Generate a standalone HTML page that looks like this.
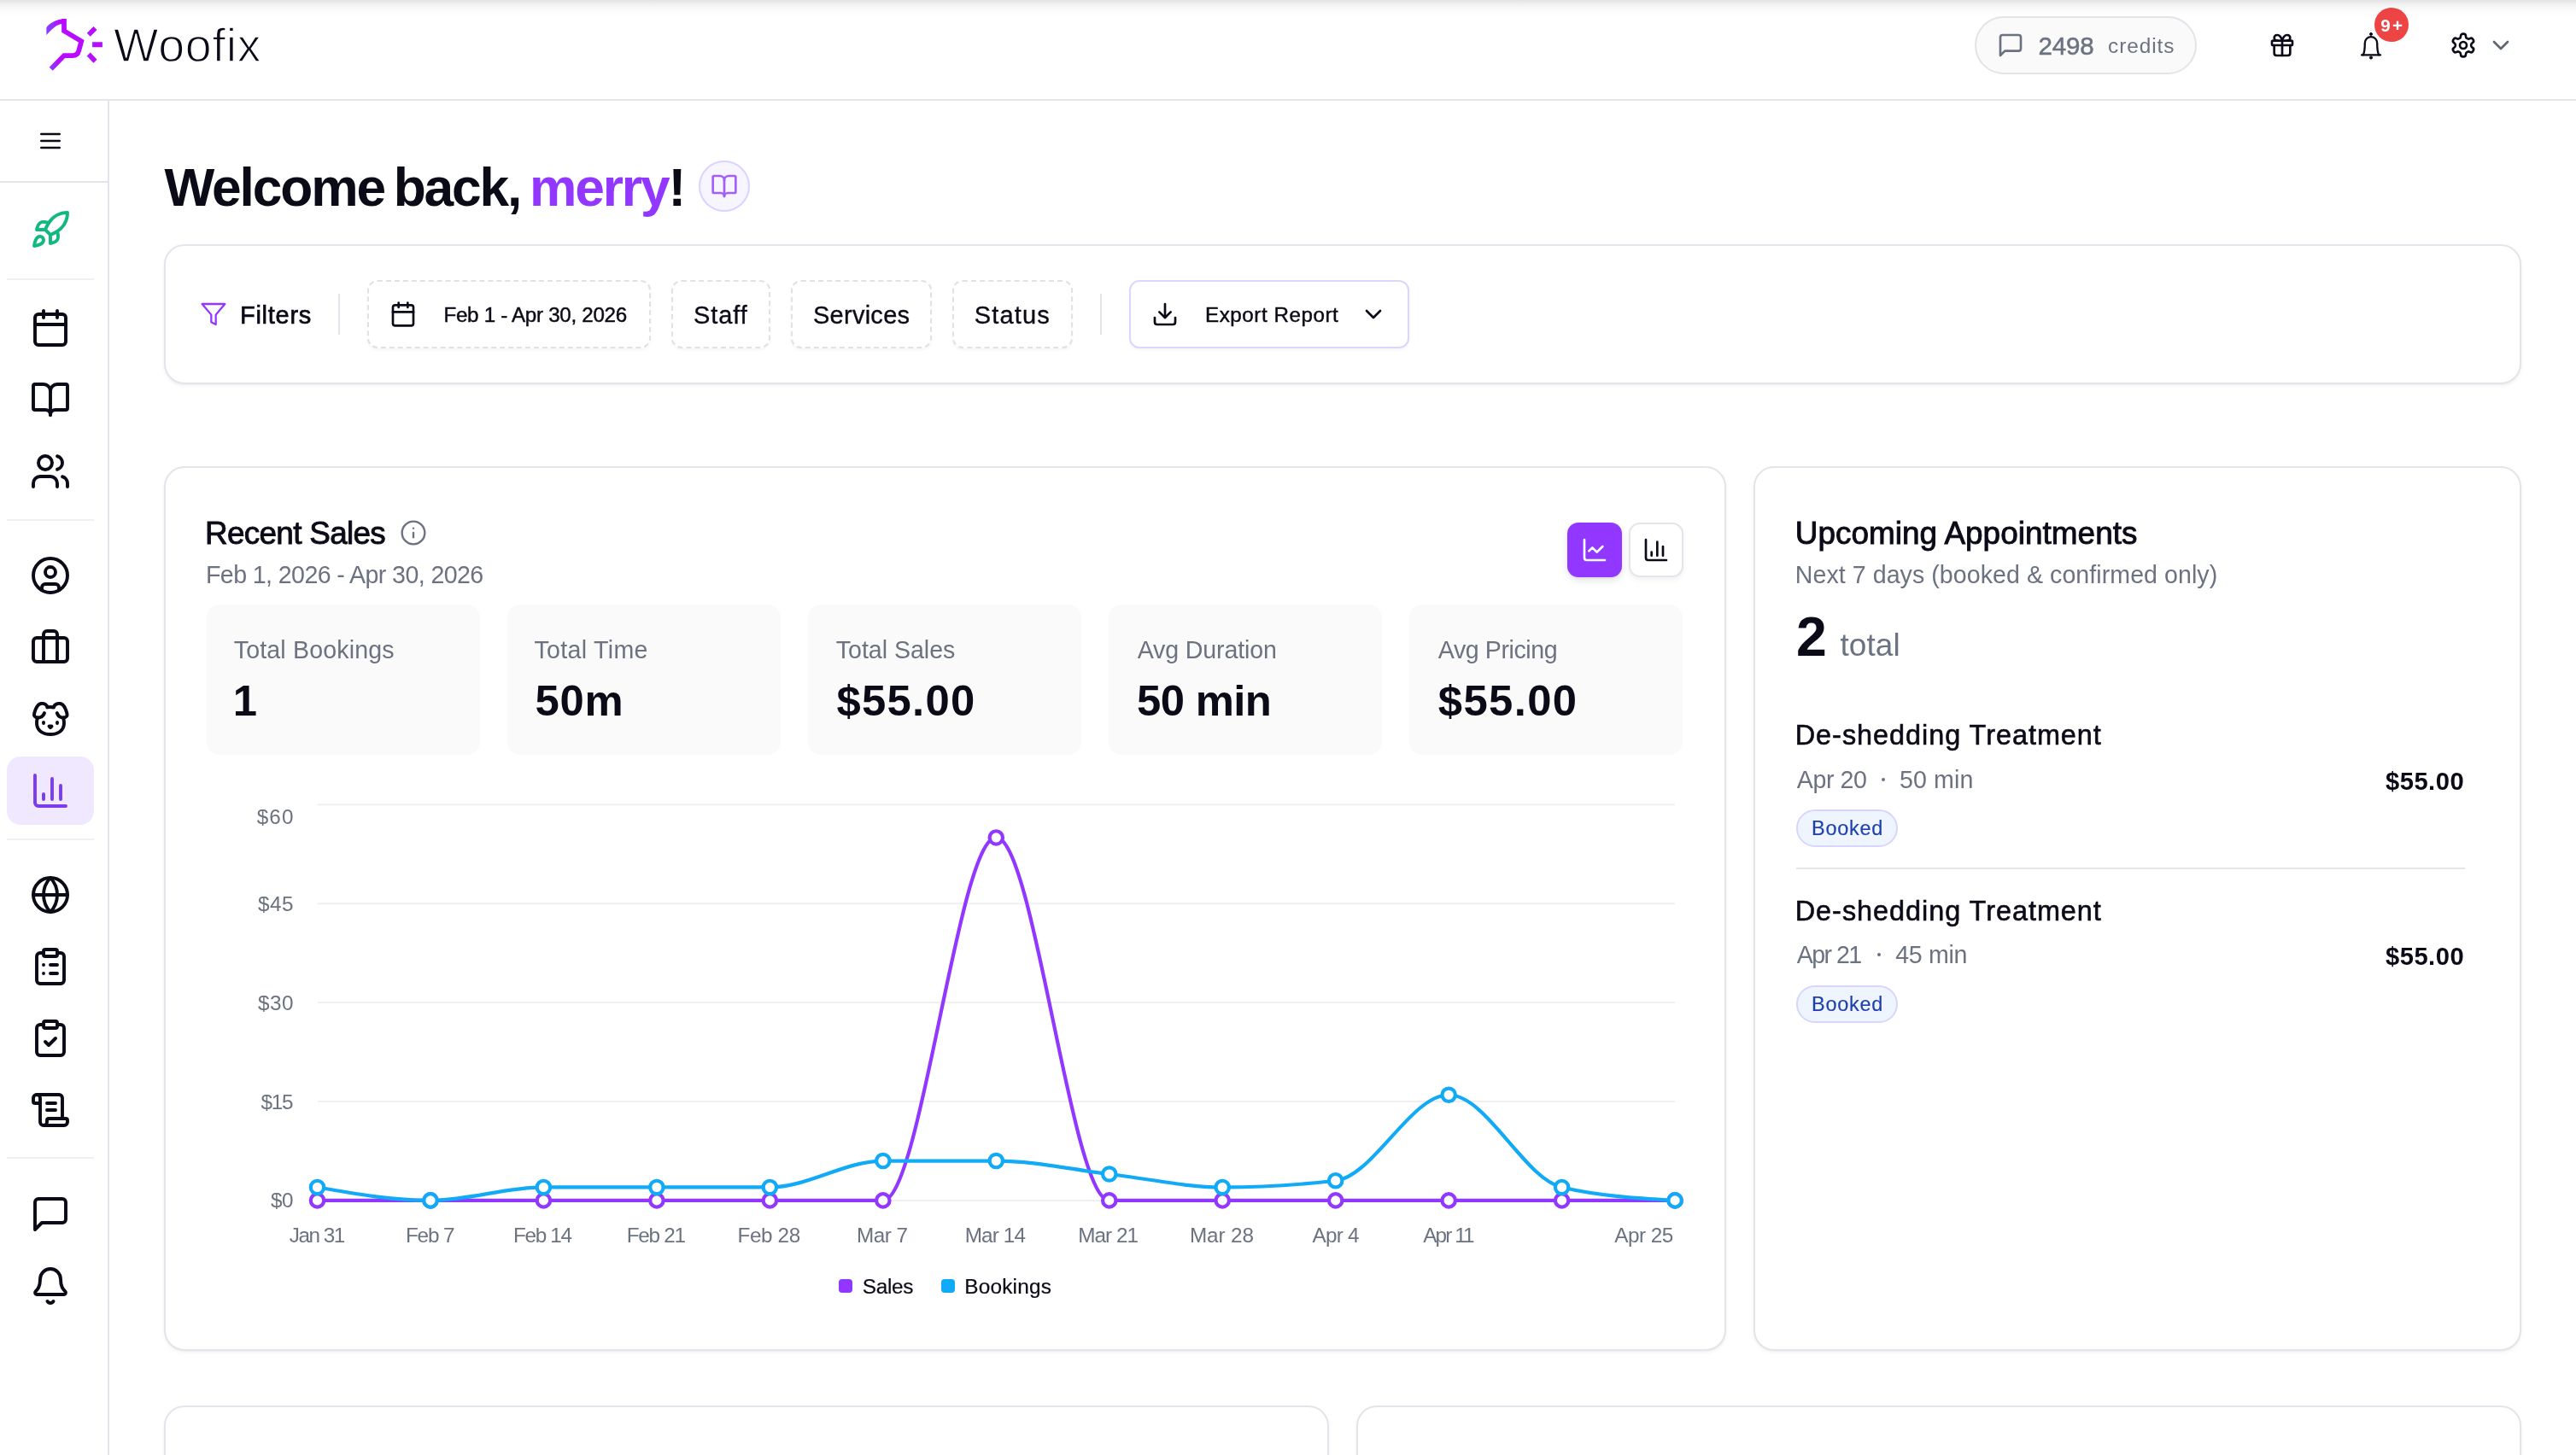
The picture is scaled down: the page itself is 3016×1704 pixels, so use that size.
<!DOCTYPE html><html lang="en"><head><meta charset="utf-8"><title>Woofix Dashboard</title><style>
*{box-sizing:border-box;margin:0;padding:0}
html,body{width:3016px;height:1704px;overflow:hidden;background:#fff}
body{font-family:"Liberation Sans", Arial, sans-serif;color:#0b0b17;-webkit-font-smoothing:antialiased}
#app{position:relative;width:3016px;height:1704px;overflow:hidden;background:transparent;will-change:transform}
#app *{position:absolute}
.t{white-space:nowrap;font-weight:400}
.t span{position:static !important}
.thin{-webkit-text-stroke:1.35px #fff}
.ic{overflow:visible}
.wrap{left:0;top:0;width:0;height:0;overflow:visible}
.topbar{left:0;top:0;width:3016px;height:118px;background:#fff;border-bottom:2px solid #e4e4ea}
.topshade{left:0;top:0;width:3016px;height:20px;background:linear-gradient(to bottom,rgba(0,0,0,.112) 0,rgba(0,0,0,.078) 3px,rgba(0,0,0,.048) 6px,rgba(0,0,0,.024) 10px,rgba(0,0,0,.008) 15px,rgba(0,0,0,0) 19px);pointer-events:none}
.sidebar{left:0;top:118px;width:128px;height:1586px;background:#fff;border-right:2px solid #e4e4ea}
.sbtop{left:0;top:0;width:126px;height:96px;border-bottom:2px solid #e4e4ea}
.sdiv{left:8px;width:102px;height:2px;background:#f0f0f4}
.active{left:8px;width:102px;height:80px;border-radius:16px;background:#efe8ff}
.card{background:#fff;border:2px solid #e4e4ea;border-radius:24px;box-shadow:0 2px 4px rgba(16,16,40,.05),0 1px 2px rgba(16,16,40,.03)}
.pill{left:2312px;top:19px;width:260px;height:68px;border-radius:34px;border:2px solid #e3e3e9;background:#fafafb}
.nbadge{left:2780px;top:8.75px;width:40px;height:40px;border-radius:50%;background:#ef4444}
.bookbtn{left:818px;top:188px;width:60px;height:60px;border-radius:50%;background:#f7f5ff;border:2px solid #dad3ff}
.vsep{width:2px;height:48px;top:344px;background:#e4e4ea}
.fbtn{top:328px;height:80px;border:2px dashed #e1e1e8;border-radius:12px;background:#fff;box-shadow:0 2px 3px rgba(16,16,40,.04)}
.ebtn{left:1322px;top:328px;width:328px;height:80px;border:2px solid #dcd6ff;border-radius:12px;background:#fff;box-shadow:0 2px 3px rgba(16,16,40,.04)}
.tg{top:612px;width:64px;height:64px;border-radius:13px}
.tg.on{left:1835px;background:#9137ff;box-shadow:0 4px 8px rgba(16,16,40,.10),0 1px 3px rgba(16,16,40,.08)}
.tg.off{left:1907px;background:#fff;border:2px solid #e4e4ea;box-shadow:0 3px 6px rgba(16,16,40,.06)}
.stat{top:708px;width:320px;height:176px;border-radius:16px;background:#fafafa}
.sw{width:16px;height:16px;border-radius:4px;top:1498px}
.bk{left:2103px;width:119px;height:44px;border-radius:22px;background:#eff5ff;border:2px solid #d8d5fc}
.hr{left:2103px;width:783px;height:2px;background:#e4e4ea}
.dot{width:4px;height:4px;border-radius:50%;background:#6b7280}
@media (max-width:1600px){html,body{width:1508px;height:852px}#app{zoom:.5}}
</style></head><body><div id="app">
<main class="wrap">
<div class="wrap pagehead"><h1 class="t" id="title" style="left:192.5px;top:188.5px;font-size:62.3px;line-height:62.3px;color:#0b0b17;font-weight:700;letter-spacing:-2.13px;word-spacing:-4.5px;">Welcome back, <span style="color:#9137ff">merry</span>!</h1><div class="bookbtn"></div><svg class="ic" style="left:831.75px;top:202px" width="32" height="32" viewBox="0 0 24 24" fill="none" stroke="#a45eff" stroke-width="2" stroke-linecap="round" stroke-linejoin="round"><path d="M12 7v14"/><path d="M3 18a1 1 0 0 1-1-1V4a1 1 0 0 1 1-1h5a4 4 0 0 1 4 4 4 4 0 0 1 4-4h5a1 1 0 0 1 1 1v13a1 1 0 0 1-1 1h-6a3 3 0 0 0-3 3 3 3 0 0 0-3-3z"/></svg></div>
<section class="card" style="left:192px;top:286px;width:2760px;height:164px"></section>
<div class="wrap filterbar">
<svg class="ic" style="left:233.9px;top:351.9px" width="32" height="32" viewBox="0 0 24 24" fill="none" stroke="#9137ff" stroke-width="1.7" stroke-linecap="round" stroke-linejoin="round"><path d="M22 3H2l8 9.46V19l4 2v-8.54z"/></svg><span class="t" id="filters" style="left:281px;top:355px;font-size:29px;line-height:29px;color:#0b0b17;letter-spacing:0.72px;-webkit-text-stroke:0.7px #0b0b17;">Filters</span>
<div class="vsep" style="left:396px"></div>
<div class="fbtn" style="left:430px;width:332px"></div><svg class="ic" style="left:455.9px;top:351.5px" width="32" height="32" viewBox="0 0 24 24" fill="none" stroke="#0b0b17" stroke-width="2" stroke-linecap="round" stroke-linejoin="round"><path d="M8 2v4"/><path d="M16 2v4"/><rect width="18" height="18" x="3" y="4" rx="2"/><path d="M3 10h18"/></svg><span class="t" id="daterange" style="left:519.5px;top:356.5px;font-size:24.2px;line-height:24.2px;color:#0b0b17;letter-spacing:-0.31px;-webkit-text-stroke:0.45px #0b0b17;">Feb 1 - Apr 30, 2026</span>
<div class="fbtn" style="left:786px;width:116px"></div><span class="t" id="staff" style="left:812px;top:355px;font-size:29px;line-height:29px;color:#0b0b17;letter-spacing:0.92px;-webkit-text-stroke:0.35px #0b0b17;">Staff</span>
<div class="fbtn" style="left:926px;width:165px"></div><span class="t" id="services" style="left:952px;top:355px;font-size:29px;line-height:29px;color:#0b0b17;letter-spacing:0.26px;-webkit-text-stroke:0.35px #0b0b17;">Services</span>
<div class="fbtn" style="left:1115px;width:141px"></div><span class="t" id="status" style="left:1140.75px;top:355px;font-size:29px;line-height:29px;color:#0b0b17;letter-spacing:1.16px;-webkit-text-stroke:0.35px #0b0b17;">Status</span>
<div class="vsep" style="left:1288px"></div>
<div class="ebtn"></div><svg class="ic" style="left:1347.6px;top:351.75px" width="32" height="32" viewBox="0 0 24 24" fill="none" stroke="#0b0b17" stroke-width="2" stroke-linecap="round" stroke-linejoin="round"><path d="M21 15v4a2 2 0 0 1-2 2H5a2 2 0 0 1-2-2v-4"/><path d="m7 10 5 5 5-5"/><path d="M12 15V3"/></svg><span class="t" id="export" style="left:1411px;top:356.5px;font-size:24.2px;line-height:24.2px;color:#0b0b17;letter-spacing:0.54px;-webkit-text-stroke:0.45px #0b0b17;">Export Report</span><svg class="ic" style="left:1592px;top:352px" width="32" height="32" viewBox="0 0 24 24" fill="none" stroke="#0b0b17" stroke-width="2" stroke-linecap="round" stroke-linejoin="round"><path d="m6 9 6 6 6-6"/></svg>
</div>
<section class="card" style="left:192px;top:546px;width:1829px;height:1036px"></section>
<div class="wrap sales">
<h2 class="t" id="rs" style="left:240px;top:607px;font-size:36.9px;line-height:36.9px;color:#0b0b17;letter-spacing:-0.7px;-webkit-text-stroke:0.9px #0b0b17;">Recent Sales</h2><svg class="ic" style="left:467.6px;top:608px" width="32" height="32" viewBox="0 0 24 24" fill="none" stroke="#6b7280" stroke-width="1.8" stroke-linecap="round" stroke-linejoin="round"><circle cx="12" cy="12" r="10"/><path d="M12 16v-4"/><path d="M12 8h.01"/></svg><p class="t" id="rs_sub" style="left:241px;top:658.5px;font-size:28.6px;line-height:28.6px;color:#6b7280;letter-spacing:-0.6px;">Feb 1, 2026 - Apr 30, 2026</p>
<div class="tg on"></div><svg class="ic" style="left:1851px;top:628px" width="32" height="32" viewBox="0 0 24 24" fill="none" stroke="#fff" stroke-width="2" stroke-linecap="round" stroke-linejoin="round"><path d="M3 3v16a2 2 0 0 0 2 2h16"/><path d="m19 9-5 5-4-4-3 3"/></svg>
<div class="tg off"></div><svg class="ic" style="left:1923px;top:628px" width="32" height="32" viewBox="0 0 24 24" fill="none" stroke="#0b0b17" stroke-width="2" stroke-linecap="round" stroke-linejoin="round"><path d="M3 3v16a2 2 0 0 0 2 2h16"/><path d="M18 17V9"/><path d="M13 17V5"/><path d="M8 17v-3"/></svg>
<div class="stat" style="left:242px"></div><span class="t" id="s1l" style="left:273.75px;top:746.5px;font-size:28.6px;line-height:28.6px;color:#6b7280;letter-spacing:0.14px;">Total Bookings</span><span class="t" id="s1v" style="left:272.75px;top:796px;font-size:50.8px;line-height:50.8px;color:#0b0b17;font-weight:700;">1</span>
<div class="stat" style="left:594px"></div><span class="t" id="s2l" style="left:625.5px;top:746.5px;font-size:28.6px;line-height:28.6px;color:#6b7280;letter-spacing:0.29px;">Total Time</span><span class="t" id="s2v" style="left:626.5px;top:796px;font-size:50.8px;line-height:50.8px;color:#0b0b17;font-weight:700;letter-spacing:0.75px;">50m</span>
<div class="stat" style="left:946px"></div><span class="t" id="s3l" style="left:978.75px;top:746.5px;font-size:28.6px;line-height:28.6px;color:#6b7280;letter-spacing:-0.03px;">Total Sales</span><span class="t" id="s3v" style="left:979.5px;top:796px;font-size:50.8px;line-height:50.8px;color:#0b0b17;font-weight:700;letter-spacing:1.28px;">$55.00</span>
<div class="stat" style="left:1298px"></div><span class="t" id="s4l" style="left:1331.7px;top:746.5px;font-size:28.6px;line-height:28.6px;color:#6b7280;letter-spacing:-0.14px;">Avg Duration</span><span class="t" id="s4v" style="left:1331px;top:796px;font-size:50.8px;line-height:50.8px;color:#0b0b17;font-weight:700;letter-spacing:-0.62px;">50 min</span>
<div class="stat" style="left:1650px"></div><span class="t" id="s5l" style="left:1683.8px;top:746.5px;font-size:28.6px;line-height:28.6px;color:#6b7280;letter-spacing:-0.43px;">Avg Pricing</span><span class="t" id="s5v" style="left:1683.8px;top:796px;font-size:50.8px;line-height:50.8px;color:#0b0b17;font-weight:700;letter-spacing:1.38px;">$55.00</span>
<svg class="chart" style="left:230px;top:900px" width="1780" height="620" viewBox="230 900 1780 620" fill="none"><line x1="371.5" x2="1961.1" y1="942.3" y2="942.3" stroke="#f0f0f3" stroke-width="2"/><line x1="371.5" x2="1961.1" y1="1058.2" y2="1058.2" stroke="#f0f0f3" stroke-width="2"/><line x1="371.5" x2="1961.1" y1="1174.1" y2="1174.1" stroke="#f0f0f3" stroke-width="2"/><line x1="371.5" x2="1961.1" y1="1290" y2="1290" stroke="#f0f0f3" stroke-width="2"/><line x1="371.5" x2="1961.1" y1="1405.9" y2="1405.9" stroke="#f0f0f3" stroke-width="2"/><path d="M371.5,1405.9C415.66,1405.9,459.81,1405.9,503.97,1405.9C548.12,1405.9,592.28,1405.9,636.43,1405.9C680.59,1405.9,724.74,1405.9,768.9,1405.9C813.06,1405.9,857.21,1405.9,901.37,1405.9C945.52,1405.9,989.68,1405.9,1033.83,1405.9C1077.99,1405.9,1122.14,980.93,1166.3,980.93C1210.46,980.93,1254.61,1405.9,1298.77,1405.9C1342.92,1405.9,1387.08,1405.9,1431.23,1405.9C1475.39,1405.9,1519.54,1405.9,1563.7,1405.9C1607.86,1405.9,1652.01,1405.9,1696.17,1405.9C1740.32,1405.9,1784.48,1405.9,1828.63,1405.9C1872.79,1405.9,1916.94,1405.9,1961.1,1405.9" stroke="#9137ff" stroke-width="4.2" stroke-linecap="round" stroke-linejoin="round"/><g fill="#fff" stroke="#9137ff" stroke-width="4.2"><circle cx="371.5" cy="1405.9" r="7.7"/><circle cx="503.97" cy="1405.9" r="7.7"/><circle cx="636.43" cy="1405.9" r="7.7"/><circle cx="768.9" cy="1405.9" r="7.7"/><circle cx="901.37" cy="1405.9" r="7.7"/><circle cx="1033.83" cy="1405.9" r="7.7"/><circle cx="1166.3" cy="980.93" r="7.7"/><circle cx="1298.77" cy="1405.9" r="7.7"/><circle cx="1431.23" cy="1405.9" r="7.7"/><circle cx="1563.7" cy="1405.9" r="7.7"/><circle cx="1696.17" cy="1405.9" r="7.7"/><circle cx="1828.63" cy="1405.9" r="7.7"/><circle cx="1961.1" cy="1405.9" r="7.7"/></g><path d="M371.5,1390.45C415.66,1398.17,459.81,1405.9,503.97,1405.9C548.12,1405.9,592.28,1390.45,636.43,1390.45C680.59,1390.45,724.74,1390.45,768.9,1390.45C813.06,1390.45,857.21,1390.45,901.37,1390.45C945.52,1390.45,989.68,1359.54,1033.83,1359.54C1077.99,1359.54,1122.14,1359.54,1166.3,1359.54C1210.46,1359.54,1254.61,1369.84,1298.77,1374.99C1342.92,1380.14,1387.08,1390.45,1431.23,1390.45C1475.39,1390.45,1519.54,1387.87,1563.7,1382.72C1607.86,1377.57,1652.01,1282.27,1696.17,1282.27C1740.32,1282.27,1784.48,1380.14,1828.63,1390.45C1872.79,1400.75,1916.94,1403.32,1961.1,1405.9" stroke="#10aaf7" stroke-width="4.2" stroke-linecap="round" stroke-linejoin="round"/><g fill="#fff" stroke="#10aaf7" stroke-width="4.2"><circle cx="371.5" cy="1390.45" r="7.7"/><circle cx="503.97" cy="1405.9" r="7.7"/><circle cx="636.43" cy="1390.45" r="7.7"/><circle cx="768.9" cy="1390.45" r="7.7"/><circle cx="901.37" cy="1390.45" r="7.7"/><circle cx="1033.83" cy="1359.54" r="7.7"/><circle cx="1166.3" cy="1359.54" r="7.7"/><circle cx="1298.77" cy="1374.99" r="7.7"/><circle cx="1431.23" cy="1390.45" r="7.7"/><circle cx="1563.7" cy="1382.72" r="7.7"/><circle cx="1696.17" cy="1282.27" r="7.7"/><circle cx="1828.63" cy="1390.45" r="7.7"/><circle cx="1961.1" cy="1405.9" r="7.7"/></g></svg>
<span class="t" id="y60" style="left:300.75px;top:945px;font-size:24.3px;line-height:24.3px;color:#6b7280;letter-spacing:1.11px;">$60</span>
<span class="t" id="y45" style="left:302px;top:1047px;font-size:24.3px;line-height:24.3px;color:#6b7280;letter-spacing:0.49px;">$45</span>
<span class="t" id="y30" style="left:302px;top:1163px;font-size:24.3px;line-height:24.3px;color:#6b7280;letter-spacing:0.49px;">$30</span>
<span class="t" id="y15" style="left:305.5px;top:1279px;font-size:24.3px;line-height:24.3px;color:#6b7280;letter-spacing:-1.26px;">$15</span>
<span class="t" id="y0" style="left:316.9px;top:1393.75px;font-size:24.3px;line-height:24.3px;color:#6b7280;letter-spacing:-0.41px;">$0</span>
<span class="t" id="x0" style="left:338.75px;top:1434.75px;font-size:24.3px;line-height:24.3px;color:#6b7280;letter-spacing:-1.49px;">Jan 31</span>
<span class="t" id="x1" style="left:474.9px;top:1434.75px;font-size:24.3px;line-height:24.3px;color:#6b7280;letter-spacing:-1.15px;">Feb 7</span>
<span class="t" id="x2" style="left:600.9px;top:1434.75px;font-size:24.3px;line-height:24.3px;color:#6b7280;letter-spacing:-1.29px;">Feb 14</span>
<span class="t" id="x3" style="left:733.8px;top:1434.75px;font-size:24.3px;line-height:24.3px;color:#6b7280;letter-spacing:-1.29px;">Feb 21</span>
<span class="t" id="x4" style="left:863.5px;top:1434.75px;font-size:24.3px;line-height:24.3px;color:#6b7280;letter-spacing:-0.38px;">Feb 28</span>
<span class="t" id="x5" style="left:1003px;top:1434.75px;font-size:24.3px;line-height:24.3px;color:#6b7280;letter-spacing:-0.52px;">Mar 7</span>
<span class="t" id="x6" style="left:1129.75px;top:1434.75px;font-size:24.3px;line-height:24.3px;color:#6b7280;letter-spacing:-0.87px;">Mar 14</span>
<span class="t" id="x7" style="left:1262.25px;top:1434.75px;font-size:24.3px;line-height:24.3px;color:#6b7280;letter-spacing:-0.97px;">Mar 21</span>
<span class="t" id="x8" style="left:1392.9px;top:1434.75px;font-size:24.3px;line-height:24.3px;color:#6b7280;letter-spacing:-0.1px;">Mar 28</span>
<span class="t" id="x9" style="left:1536.5px;top:1434.75px;font-size:24.3px;line-height:24.3px;color:#6b7280;letter-spacing:-0.79px;">Apr 4</span>
<span class="t" id="x10" style="left:1666.2px;top:1434.75px;font-size:24.3px;line-height:24.3px;color:#6b7280;letter-spacing:-1.87px;">Apr 11</span>
<span class="t" id="x11" style="left:1890.3px;top:1434.75px;font-size:24.3px;line-height:24.3px;color:#6b7280;letter-spacing:-0.51px;">Apr 25</span>
<div class="sw" style="left:982px;background:#9137ff"></div><span class="t" id="lg1" style="left:1009.75px;top:1494.5px;font-size:24.4px;line-height:24.4px;color:#0b0b17;letter-spacing:-0.33px;-webkit-text-stroke:0.2px #0b0b17;">Sales</span>
<div class="sw" style="left:1102px;background:#10aaf7"></div><span class="t" id="lg2" style="left:1129.25px;top:1494.5px;font-size:24.4px;line-height:24.4px;color:#0b0b17;letter-spacing:0.19px;-webkit-text-stroke:0.2px #0b0b17;">Bookings</span>
</div>
<section class="card" style="left:2053px;top:546px;width:899px;height:1036px"></section>
<div class="wrap upcoming">
<h2 class="t" id="up" style="left:2101.75px;top:607px;font-size:36.9px;line-height:36.9px;color:#0b0b17;letter-spacing:0.04px;-webkit-text-stroke:0.9px #0b0b17;">Upcoming Appointments</h2><p class="t" id="up_sub" style="left:2101.75px;top:658.5px;font-size:28.6px;line-height:28.6px;color:#6b7280;letter-spacing:0.05px;">Next 7 days (booked &amp; confirmed only)</p><span class="t" id="up_n" style="left:2103px;top:713.5px;font-size:64.4px;line-height:64.4px;color:#0b0b17;font-weight:700;">2</span><span class="t" id="up_t" style="left:2154.5px;top:736.5px;font-size:37px;line-height:37px;color:#6b7280;letter-spacing:0.07px;">total</span>
<div class="wrap appt"><h3 class="t" id="a0t" style="left:2101.75px;top:845px;font-size:32.4px;line-height:32.4px;color:#0b0b17;letter-spacing:0.98px;-webkit-text-stroke:0.6px #0b0b17;">De-shedding Treatment</h3><span class="t" id="a0d" style="left:2103.75px;top:898.5px;font-size:28.6px;line-height:28.6px;color:#6b7280;letter-spacing:-0.42px;">Apr 20</span><div class="dot" style="left:2203px;top:910.5px"></div><span class="t" id="a0m" style="left:2224px;top:898.5px;font-size:28.6px;line-height:28.6px;color:#6b7280;letter-spacing:0.12px;">50 min</span><span class="t" id="a0p" style="left:2793px;top:900.75px;font-size:29.2px;line-height:29.2px;color:#0b0b17;font-weight:700;letter-spacing:0.47px;">$55.00</span>
<div class="bk" style="top:948px"></div><span class="t" id="a0b" style="left:2121px;top:959px;font-size:23.5px;line-height:23.5px;color:#1e3fae;letter-spacing:0.72px;-webkit-text-stroke:0.15px #1e3fae;">Booked</span></div>
<div class="hr" style="top:1016px"></div>
<div class="wrap appt"><h3 class="t" id="a1t" style="left:2101.75px;top:1050.5px;font-size:32.4px;line-height:32.4px;color:#0b0b17;letter-spacing:0.98px;-webkit-text-stroke:0.6px #0b0b17;">De-shedding Treatment</h3><span class="t" id="a1d" style="left:2103.75px;top:1104px;font-size:28.6px;line-height:28.6px;color:#6b7280;letter-spacing:-1.57px;">Apr 21</span><div class="dot" style="left:2197.5px;top:1116px"></div><span class="t" id="a1m" style="left:2219.25px;top:1104px;font-size:28.6px;line-height:28.6px;color:#6b7280;letter-spacing:-0.33px;">45 min</span><span class="t" id="a1p" style="left:2793px;top:1106.25px;font-size:29.2px;line-height:29.2px;color:#0b0b17;font-weight:700;letter-spacing:0.47px;">$55.00</span>
<div class="bk" style="top:1153.5px"></div><span class="t" id="a1b" style="left:2121px;top:1164.5px;font-size:23.5px;line-height:23.5px;color:#1e3fae;letter-spacing:0.72px;-webkit-text-stroke:0.15px #1e3fae;">Booked</span></div>
</div>
<section class="card" style="left:192px;top:1646px;width:1364px;height:200px"></section>
<section class="card" style="left:1588px;top:1646px;width:1364px;height:200px"></section>
</main>
<aside class="wrap"><div class="sidebar"><div class="sbtop"></div></div>
<svg class="ic" style="left:43px;top:149px" width="32" height="32" viewBox="0 0 24 24" fill="none" stroke="#0b0b17" stroke-width="2" stroke-linecap="round" stroke-linejoin="round"><path d="M4 12h16"/><path d="M4 6h16"/><path d="M4 18h16"/></svg>
<nav class="wrap">
<div class="sdiv" style="top:326px"></div>
<div class="sdiv" style="top:608px"></div>
<div class="sdiv" style="top:982px"></div>
<div class="sdiv" style="top:1355px"></div>
<div class="active" style="top:886px"></div>
<svg class="ic" style="left:35.4px;top:245px" width="48" height="48" viewBox="0 0 24 24" fill="none" stroke="#11b981" stroke-width="1.95" stroke-linecap="round" stroke-linejoin="round"><path d="M4.5 16.5c-1.5 1.26-2 5-2 5s3.74-.5 5-2c.71-.84.7-2.13-.09-2.91a2.18 2.18 0 0 0-2.91-.09z"/><path d="m12 15-3-3a22 22 0 0 1 2-3.95A12.88 12.88 0 0 1 22 2c0 2.72-.78 7.5-6 11a22.35 22.35 0 0 1-4 2z"/><path d="M9 12H4s.55-3.03 2-4c1.62-1.08 5 0 5 0"/><path d="M12 15v5s3.03-.55 4-2c1.08-1.62 0-5 0-5"/></svg>
<svg class="ic" style="left:35.4px;top:360px" width="48" height="48" viewBox="0 0 24 24" fill="none" stroke="#0b0b17" stroke-width="1.95" stroke-linecap="round" stroke-linejoin="round"><path d="M8 2v4"/><path d="M16 2v4"/><rect width="18" height="18" x="3" y="4" rx="2"/><path d="M3 10h18"/></svg>
<svg class="ic" style="left:35.4px;top:444px" width="48" height="48" viewBox="0 0 24 24" fill="none" stroke="#0b0b17" stroke-width="1.95" stroke-linecap="round" stroke-linejoin="round"><path d="M12 7v14"/><path d="M3 18a1 1 0 0 1-1-1V4a1 1 0 0 1 1-1h5a4 4 0 0 1 4 4 4 4 0 0 1 4-4h5a1 1 0 0 1 1 1v13a1 1 0 0 1-1 1h-6a3 3 0 0 0-3 3 3 3 0 0 0-3-3z"/></svg>
<svg class="ic" style="left:35.4px;top:528px" width="48" height="48" viewBox="0 0 24 24" fill="none" stroke="#0b0b17" stroke-width="1.95" stroke-linecap="round" stroke-linejoin="round"><path d="M16 21v-2a4 4 0 0 0-4-4H6a4 4 0 0 0-4 4v2"/><circle cx="9" cy="7" r="4"/><path d="M22 21v-2a4 4 0 0 0-3-3.87"/><path d="M16 3.13a4 4 0 0 1 0 7.75"/></svg>
<svg class="ic" style="left:35.4px;top:650px" width="48" height="48" viewBox="0 0 24 24" fill="none" stroke="#0b0b17" stroke-width="1.95" stroke-linecap="round" stroke-linejoin="round"><circle cx="12" cy="12" r="10"/><circle cx="12" cy="10" r="3"/><path d="M7 20.662V19a2 2 0 0 1 2-2h6a2 2 0 0 1 2 2v1.662"/></svg>
<svg class="ic" style="left:35.4px;top:732.6px" width="48" height="48" viewBox="0 0 24 24" fill="none" stroke="#0b0b17" stroke-width="1.95" stroke-linecap="round" stroke-linejoin="round"><rect width="20" height="14" x="2" y="7" rx="2" ry="2"/><path d="M16 21V5a2 2 0 0 0-2-2h-4a2 2 0 0 0-2 2v16"/></svg>
<svg class="ic" style="left:35.4px;top:818px" width="48" height="48" viewBox="0 0 24 24" fill="none" stroke="#0b0b17" stroke-width="1.95" stroke-linecap="round" stroke-linejoin="round"><path d="M11.25 16.25h1.5L12 17z"/><path d="M16 14v.5"/><path d="M4.42 11.247A13.152 13.152 0 0 0 4 14.556C4 18.728 7.582 21 12 21s8-2.272 8-6.444a11.702 11.702 0 0 0-.493-3.309"/><path d="M8 14v.5"/><path d="M8.5 8.5c-.384 1.05-1.083 2.028-2.344 2.5-1.931.722-3.576-.297-3.656-1-.113-.994 1.177-6.53 4-7 1.923-.321 3.651.845 3.652 2.235A7.497 7.497 0 0 1 14 5.277c0-1.39 1.844-2.598 3.767-2.277 2.823.47 4.113 6.006 4 7-.08.703-1.725 1.722-3.656 1-1.261-.472-1.855-1.45-2.239-2.5"/></svg>
<svg class="ic" style="left:35.4px;top:902px" width="48" height="48" viewBox="0 0 24 24" fill="none" stroke="#7c3bee" stroke-width="1.95" stroke-linecap="round" stroke-linejoin="round"><path d="M3 3v16a2 2 0 0 0 2 2h16"/><path d="M18 17V9"/><path d="M13 17V5"/><path d="M8 17v-3"/></svg>
<svg class="ic" style="left:35.4px;top:1024px" width="48" height="48" viewBox="0 0 24 24" fill="none" stroke="#0b0b17" stroke-width="1.95" stroke-linecap="round" stroke-linejoin="round"><circle cx="12" cy="12" r="10"/><path d="M12 2a14.5 14.5 0 0 0 0 20 14.5 14.5 0 0 0 0-20"/><path d="M2 12h20"/></svg>
<svg class="ic" style="left:35.4px;top:1108px" width="48" height="48" viewBox="0 0 24 24" fill="none" stroke="#0b0b17" stroke-width="1.95" stroke-linecap="round" stroke-linejoin="round"><rect width="8" height="4" x="8" y="2" rx="1" ry="1"/><path d="M16 4h2a2 2 0 0 1 2 2v14a2 2 0 0 1-2 2H6a2 2 0 0 1-2-2V6a2 2 0 0 1 2-2h2"/><path d="M12 11h4"/><path d="M12 16h4"/><path d="M8 11h.01"/><path d="M8 16h.01"/></svg>
<svg class="ic" style="left:35.4px;top:1192px" width="48" height="48" viewBox="0 0 24 24" fill="none" stroke="#0b0b17" stroke-width="1.95" stroke-linecap="round" stroke-linejoin="round"><rect width="8" height="4" x="8" y="2" rx="1" ry="1"/><path d="M16 4h2a2 2 0 0 1 2 2v14a2 2 0 0 1-2 2H6a2 2 0 0 1-2-2V6a2 2 0 0 1 2-2h2"/><path d="m9 14 2 2 4-4"/></svg>
<svg class="ic" style="left:35.4px;top:1276px" width="48" height="48" viewBox="0 0 24 24" fill="none" stroke="#0b0b17" stroke-width="1.95" stroke-linecap="round" stroke-linejoin="round"><path d="M15 12h-5"/><path d="M15 8h-5"/><path d="M19 17V5a2 2 0 0 0-2-2H4"/><path d="M8 21h12a2 2 0 0 0 2-2v-1a1 1 0 0 0-1-1H11a1 1 0 0 0-1 1v1a2 2 0 1 1-4 0V5a2 2 0 1 0-4 0v2a1 1 0 0 0 1 1h3"/></svg>
<svg class="ic" style="left:35.4px;top:1397.5px" width="48" height="48" viewBox="0 0 24 24" fill="none" stroke="#0b0b17" stroke-width="1.95" stroke-linecap="round" stroke-linejoin="round"><path d="M21 15a2 2 0 0 1-2 2H7l-4 4V5a2 2 0 0 1 2-2h14a2 2 0 0 1 2 2z"/></svg>
<svg class="ic" style="left:35.4px;top:1481.5px" width="48" height="48" viewBox="0 0 24 24" fill="none" stroke="#0b0b17" stroke-width="1.95" stroke-linecap="round" stroke-linejoin="round"><path d="M10.268 21a2 2 0 0 0 3.464 0"/><path d="M3.262 15.326A1 1 0 0 0 4 17h16a1 1 0 0 0 .74-1.673C19.41 13.956 18 12.499 18 8A6 6 0 0 0 6 8c0 4.499-1.411 5.956-2.738 7.326"/></svg>
</nav></aside>
<header class="wrap"><div class="topbar"></div>
<svg class="ic" style="left:40px;top:10px" width="100" height="90" viewBox="40 10 100 90" fill="none"><defs><linearGradient id="gA" gradientUnits="userSpaceOnUse" x1="55" y1="0" x2="69" y2="0"><stop offset="0" stop-color="#8a3cff"/><stop offset=".45" stop-color="#9036ff"/><stop offset="1" stop-color="#b80cff"/></linearGradient><linearGradient id="gB" gradientUnits="userSpaceOnUse" x1="102" y1="0" x2="106" y2="0"><stop offset="0" stop-color="#8a3cff"/><stop offset="1" stop-color="#b80cff"/></linearGradient><linearGradient id="gC" gradientUnits="userSpaceOnUse" x1="108" y1="0" x2="111" y2="0"><stop offset="0" stop-color="#8a3cff"/><stop offset="1" stop-color="#b80cff"/></linearGradient></defs><path d="M54.36 32.3C58 27.4 65 22.4 77.85 22.1L72.5 27.9C68.5 28 63.5 31 54.36 40.9Z" fill="url(#gA)"/><path d="M75 22.1L75 36.2L95.3 48.3L92.2 59.5Q90.8 65.05 85 65.05L75 65.05L59.7 80.7" stroke="url(#gA)" stroke-width="5.75" stroke-linejoin="miter" stroke-miterlimit="6"/><path d="M103.7 40.75L111.5 33.05" stroke="url(#gB)" stroke-width="5.8"/><path d="M107.9 52.25H119.9" stroke="url(#gC)" stroke-width="6"/><path d="M103.7 63.6L111.5 71.7" stroke="url(#gB)" stroke-width="5.8"/></svg>
<span class="t thin" id="brand" style="left:133.1px;top:25.5px;font-size:55.5px;line-height:55.5px;color:#0b0b17;letter-spacing:0.75px;">Woofix</span>
<div class="pill"></div><svg class="ic" style="left:2337.75px;top:36.7px" width="32" height="32" viewBox="0 0 24 24" fill="none" stroke="#6b7280" stroke-width="2" stroke-linecap="round" stroke-linejoin="round"><path d="M21 15a2 2 0 0 1-2 2H7l-4 4V5a2 2 0 0 1 2-2h14a2 2 0 0 1 2 2z"/></svg><span class="t" id="cred_n" style="left:2386.5px;top:39px;font-size:29.5px;line-height:29.5px;color:#6b7280;letter-spacing:-0.16px;-webkit-text-stroke:0.5px #6b7280;">2498</span><span class="t" id="cred_t" style="left:2468px;top:42px;font-size:24.4px;line-height:24.4px;color:#6b7280;letter-spacing:0.93px;">credits</span>
<svg class="ic" style="left:2656px;top:37px" width="32" height="32" viewBox="0 0 24 24" fill="none" stroke="#0b0b17" stroke-width="2" stroke-linecap="round" stroke-linejoin="round"><rect x="3" y="8" width="18" height="4" rx="1"/><path d="M12 8v13"/><path d="M19 12v7a2 2 0 0 1-2 2H7a2 2 0 0 1-2-2v-7"/><path d="M7.5 8a2.5 2.5 0 0 1 0-5A4.8 8 0 0 1 12 8a4.8 8 0 0 1 4.5-5 2.5 2.5 0 0 1 0 5"/></svg>
<svg class="ic" style="left:2760px;top:34px" width="32" height="40" viewBox="0 0 32 40" fill="none" stroke="#0b0b17" stroke-width="2.3" stroke-linecap="round" stroke-linejoin="round"><path d="M6.6 30.4C8.7 27.2 8.8 23.5 8.8 16.4a7.2 7.2 0 0 1 14.4 0C23.2 23.5 23.3 27.2 25.4 30.4"/><path d="M5 30.4H27.1"/><circle cx="16" cy="5.9" r="1.5" fill="#0b0b17" stroke-width="1"/><circle cx="16" cy="33.5" r="1.6" fill="#0b0b17" stroke-width="1"/></svg>
<div class="nbadge"></div><span class="t" id="badge" style="left:2787.2px;top:20.4px;font-size:20.6px;line-height:20.6px;color:#fff;font-weight:700;letter-spacing:2.35px;">9+</span>
<svg class="ic" style="left:2868px;top:36.8px" width="32" height="32" viewBox="0 0 24 24" fill="none" stroke="#0b0b17" stroke-width="2" stroke-linecap="round" stroke-linejoin="round"><path d="M12.22 2h-.44a2 2 0 0 0-2 2v.18a2 2 0 0 1-1 1.73l-.43.25a2 2 0 0 1-2 0l-.15-.08a2 2 0 0 0-2.73.73l-.22.38a2 2 0 0 0 .73 2.73l.15.1a2 2 0 0 1 1 1.72v.51a2 2 0 0 1-1 1.74l-.15.09a2 2 0 0 0-.73 2.73l.22.38a2 2 0 0 0 2.73.73l.15-.08a2 2 0 0 1 2 0l.43.25a2 2 0 0 1 1 1.73V20a2 2 0 0 0 2 2h.44a2 2 0 0 0 2-2v-.18a2 2 0 0 1 1-1.73l.43-.25a2 2 0 0 1 2 0l.15.08a2 2 0 0 0 2.73-.73l.22-.39a2 2 0 0 0-.73-2.73l-.15-.08a2 2 0 0 1-1-1.74v-.5a2 2 0 0 1 1-1.74l.15-.09a2 2 0 0 0 .73-2.73l-.22-.38a2 2 0 0 0-2.73-.73l-.15.08a2 2 0 0 1-2 0l-.43-.25a2 2 0 0 1-1-1.73V4a2 2 0 0 0-2-2z"/><circle cx="12" cy="12" r="3"/></svg>
<svg class="ic" style="left:2912px;top:37px" width="32" height="32" viewBox="0 0 24 24" fill="none" stroke="#5f6470" stroke-width="2" stroke-linecap="round" stroke-linejoin="round"><path d="m6 9 6 6 6-6"/></svg>
</header>
<div class="topshade"></div>
</div></body></html>
